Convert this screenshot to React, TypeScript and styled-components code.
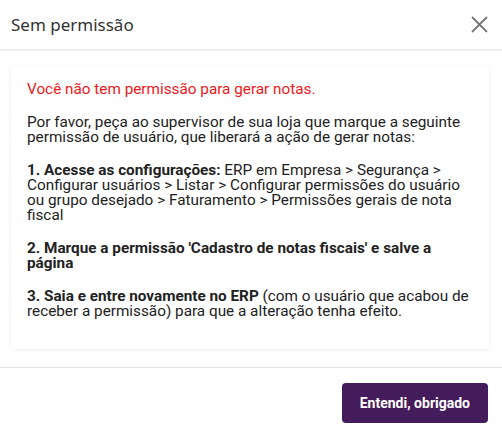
import React from 'react'
import styled, { createGlobalStyle } from 'styled-components'

const GlobalStyle = createGlobalStyle`
  html, body {
    margin: 0;
    padding: 0;
    background: #fff;
  }
  body {
    font-family: Roboto, 'Liberation Sans', sans-serif;
  }
`

const Modal = styled.div`
  width: 502px;
  height: 438px;
  display: flex;
  flex-direction: column;
  background: #fff;
`

const Header = styled.div`
  height: 49px;
  display: flex;
  align-items: center;
  justify-content: space-between;
  padding: 0 13px 0 11px;
  border-bottom: 2px solid #eeeeee;
`

const Title = styled.h1`
  margin: 0;
  font-family: 'Noto Sans', sans-serif;
  font-size: 17px;
  font-weight: 400;
  color: #333;
`

const CloseButton = styled.button`
  border: none;
  background: none;
  padding: 0;
  width: 20px;
  height: 20px;
  display: flex;
  align-items: center;
  justify-content: center;
  cursor: pointer;
`

const Body = styled.div`
  flex: 1;
  padding: 15px 13px 16px 11px;
  border-bottom: 1px solid #e4e4e4;
`

const Card = styled.div`
  padding: 16px 16px 30px 16px;
  border-radius: 3px;
  box-shadow: 0 1px 4px rgba(0, 0, 0, 0.08);
  color: #222;
  font-size: 15.3px;
  line-height: 15px;
`

const Paragraph = styled.p<{ $error?: boolean }>`
  margin: 0 0 18px;
  color: ${(p) => (p.$error ? '#f01818' : '#222')};
  &:last-child {
    margin-bottom: 0;
  }
`

const Footer = styled.div`
  height: 70px;
  display: flex;
  align-items: center;
  justify-content: flex-end;
  padding: 0 14px;
`

const PrimaryButton = styled.button`
  height: 40px;
  padding: 0 18px;
  border: none;
  border-radius: 4px;
  background: #441b5b;
  color: #fff;
  font-family: Roboto, sans-serif;
  font-size: 14px;
  font-weight: 700;
  cursor: pointer;
`

export default function App() {
  return (
    <>
      <GlobalStyle />
      <Modal>
        <Header>
          <Title>Sem permissão</Title>
          <CloseButton aria-label="Fechar">
            <svg width="17" height="17" viewBox="0 0 17 17">
              <path d="M1 1L16 16M16 1L1 16" stroke="#777" strokeWidth="1.8" />
            </svg>
          </CloseButton>
        </Header>
        <Body>
          <Card>
            <Paragraph $error>Você não tem permissão para gerar notas.</Paragraph>
            <Paragraph>
              Por favor, peça ao supervisor de sua loja que marque a seguinte permissão de usuário, que
              liberará a ação de gerar notas:
            </Paragraph>
            <Paragraph>
              <b>1. Acesse as configurações:</b> ERP em Empresa &gt; Segurança &gt; Configurar usuários
              &gt; Listar &gt; Configurar permissões do usuário ou grupo desejado &gt; Faturamento &gt;
              Permissões gerais de nota fiscal
            </Paragraph>
            <Paragraph>
              <b>2. Marque a permissão 'Cadastro de notas fiscais' e salve a página</b>
            </Paragraph>
            <Paragraph>
              <b>3. Saia e entre novamente no ERP</b> (com o usuário que acabou de receber a permissão)
              para que a alteração tenha efeito.
            </Paragraph>
          </Card>
        </Body>
        <Footer>
          <PrimaryButton>Entendi, obrigado</PrimaryButton>
        </Footer>
      </Modal>
    </>
  )
}
